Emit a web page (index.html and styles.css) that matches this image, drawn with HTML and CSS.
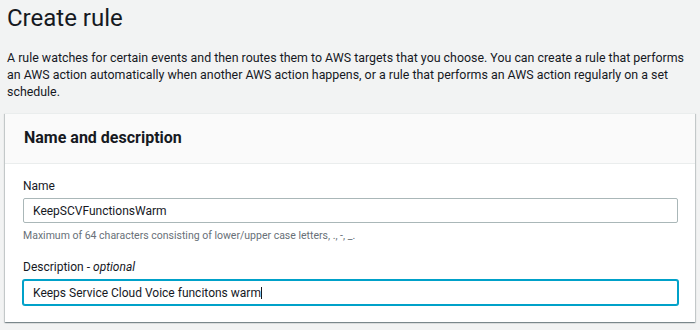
FILE: index.html
```html
<!DOCTYPE html>
<html lang="en">
<head>
<meta charset="utf-8">
<title>Create rule</title>
<link rel="stylesheet" href="styles.css">
</head>
<body>
<main class="page">
  <h1 class="title">Create rule</h1>
  <p class="intro">A rule watches for certain events and then routes them to AWS targets that you choose. You can create a rule that performs an AWS action automatically when another AWS action happens, or a rule that performs an AWS action regularly on a set schedule.</p>
  <section class="card">
    <header class="card-header">
      <h2 class="card-title">Name and description</h2>
    </header>
    <div class="card-body">
      <div class="field">
        <label class="label" for="name">Name</label>
        <input class="input" id="name" type="text" value="KeepSCVFunctionsWarm">
        <div class="hint">Maximum of 64 characters consisting of lower/upper case letters, ., -, _.</div>
      </div>
      <div class="field field-desc">
        <label class="label" for="desc">Description - <i>optional</i></label>
        <div class="input input-focus" id="desc"><span>Keeps Service Cloud Voice funcitons warm</span><span class="caret"></span></div>
      </div>
    </div>
  </section>
</main>
</body>
</html>
```

FILE: styles.css
```css
html, body {
  margin: 0;
  padding: 0;
  background: #f2f3f3;
}
body {
  font-family: Roboto, "Liberation Sans", sans-serif;
  color: #16191f;
  width: 700px;
  height: 330px;
  overflow: hidden;
}
.page {
  padding: 3px 5px 0 5px;
}
.title {
  margin: 0 0 0 2px;
  font-size: 24px;
  line-height: 30px;
  font-weight: 400;
}
.intro {
  margin: 16px 0 0 2px;
  font-size: 12.4px;
  line-height: 17px;
}
.card {
  margin-top: 13px;
  background: #fff;
  box-shadow: 0 1px 1px 0 rgba(0, 28, 36, 0.3), 1px 1px 1px 0 rgba(0, 28, 36, 0.15), -1px 1px 1px 0 rgba(0, 28, 36, 0.15);
  border-top: 1px solid #eaeded;
}
.card-header {
  background: #fafafa;
  border-bottom: 1px solid #eaeded;
  padding: 13px 19px 14px;
}
.card-title {
  margin: 0;
  font-size: 16px;
  line-height: 22px;
  font-weight: 700;
}
.card-body {
  padding: 14px 17px 17px 18px;
  display: flex;
  flex-direction: column;
  gap: 16px;
}
.field {
  display: flex;
  flex-direction: column;
}
.label {
  font-size: 12px;
  line-height: 17px;
  margin-bottom: 3px;
}
.field-desc .label {
  margin-bottom: 4px;
}
.input {
  box-sizing: border-box;
  height: 25px;
  border: 1px solid #aab7b8;
  border-radius: 2px;
  padding: 0 9px;
  font: inherit;
  font-size: 12px;
  color: #16191f;
  background: #fff;
  width: 100%;
}
.input-focus {
  display: flex;
  align-items: center;
  border: 1px solid #00a1c9;
  box-shadow: 0 0 0 1px #00a1c9;
}
.caret {
  display: inline-block;
  width: 1px;
  height: 12px;
  background: #16191f;
}
.hint {
  font-size: 10.5px;
  line-height: 15px;
  color: #687078;
  margin-top: 5px;
}
```
